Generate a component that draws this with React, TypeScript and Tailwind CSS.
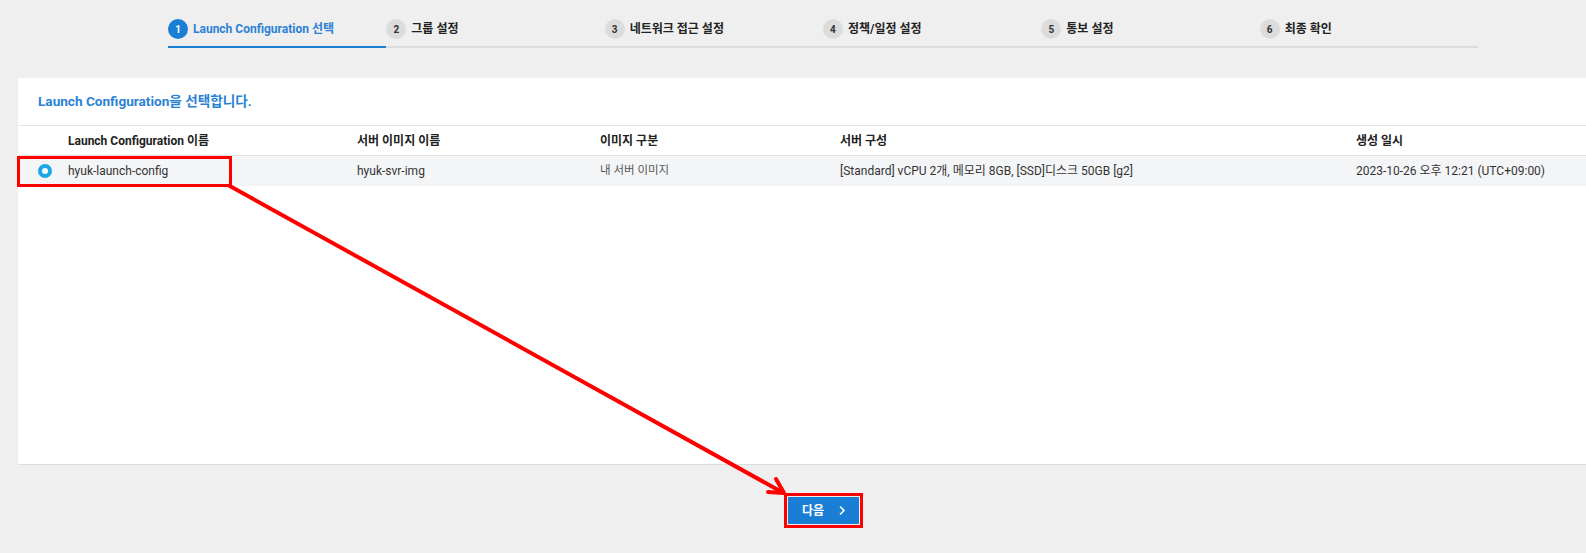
import React from "react";

const steps = [
  "Launch Configuration 선택",
  "그룹 설정",
  "네트워크 접근 설정",
  "정책/일정 설정",
  "통보 설정",
  "최종 확인",
];

const font = { fontFamily: 'Roboto, "Noto Sans CJK KR", sans-serif' };

export default function App() {
  return (
    <div className="relative w-full h-[553px] bg-[#efefef] overflow-hidden" style={font}>
      {/* stepper */}
      <div className="pt-[19px] pl-[168px]">
        <div className="grid grid-cols-6 w-[1310px] border-b-2 border-[#dcdcdc]">
          {steps.map((s, i) => (
            <div
              key={s}
              className={
                "flex items-center gap-[5px] pb-[7px] " +
                (i === 0 ? "border-b-2 border-[#1a7fd4] -mb-[2px]" : "")
              }
            >
              <span
                className={
                  "flex items-center justify-center w-[20px] h-[20px] rounded-full text-[10px] font-bold " +
                  (i === 0 ? "bg-[#1a7fd4] text-white" : "bg-[#dcdcdc] text-[#333]")
                }
              >
                {i + 1}
              </span>
              <span
                className={
                  "text-[12px] font-bold " + (i === 0 ? "text-[#2a82d6]" : "text-[#222]")
                }
              >
                {s}
              </span>
            </div>
          ))}
        </div>
      </div>

      {/* card */}
      <div className="mt-[30px] ml-[18px] h-[387px] bg-white border-b border-[#dddddd]">
        <div className="h-[47px] flex items-center pl-[20px] text-[13.6px] font-bold text-[#2a82d6]">
          Launch Configuration을 선택합니다.
        </div>
        <div className="grid grid-cols-[50px_289px_243px_240px_516px_1fr] h-[31px] items-center border-t border-b border-[#e3e3e3] text-[12px] font-bold text-[#222]">
          <span />
          <span>Launch Configuration 이름</span>
          <span>서버 이미지 이름</span>
          <span>이미지 구분</span>
          <span>서버 구성</span>
          <span>생성 일시</span>
        </div>
        <div className="grid grid-cols-[50px_289px_243px_240px_516px_1fr] h-[30px] items-center bg-[#f4f5f7] text-[12px] text-[#333]">
          <span className="pl-[20px] flex items-center">
            <span className="w-[14px] h-[14px] rounded-full border-[4px] border-[#1ea7e6] bg-white" />
          </span>
          <span>hyuk-launch-config</span>
          <span>hyuk-svr-img</span>
          <span className="text-[11.5px] text-[#555]">내 서버 이미지</span>
          <span>[Standard] vCPU 2개, 메모리 8GB, [SSD]디스크 50GB [g2]</span>
          <span>2023-10-26 오후 12:21 (UTC+09:00)</span>
        </div>
      </div>

      {/* button */}
      <div className="mt-[32px] pl-[788px]">
        <button className="flex items-center gap-[14px] w-[71px] h-[27px] pl-[14px] bg-[#1a7fd4] text-white text-[12px] font-bold">
          다음
          <svg width="8" height="11" viewBox="0 0 8 11" fill="none">
            <path d="M2 1.5 L6 5.5 L2 9.5" stroke="white" strokeWidth="1.6" />
          </svg>
        </button>
      </div>

      {/* red annotations */}
      <svg className="absolute inset-0 pointer-events-none" width="1586" height="553">
        <rect x="18.5" y="157.5" width="212" height="28" fill="none" stroke="#ff0000" strokeWidth="3" />
        <rect x="785.5" y="494.5" width="76" height="32" fill="none" stroke="#ff0000" strokeWidth="3" />
        <line x1="228" y1="185" x2="780" y2="491" stroke="#ff0000" strokeWidth="4" />
        <path d="M784 493 L768 492 M784 493 L776 479" stroke="#ff0000" strokeWidth="4" strokeLinecap="round" />
      </svg>
    </div>
  );
}
